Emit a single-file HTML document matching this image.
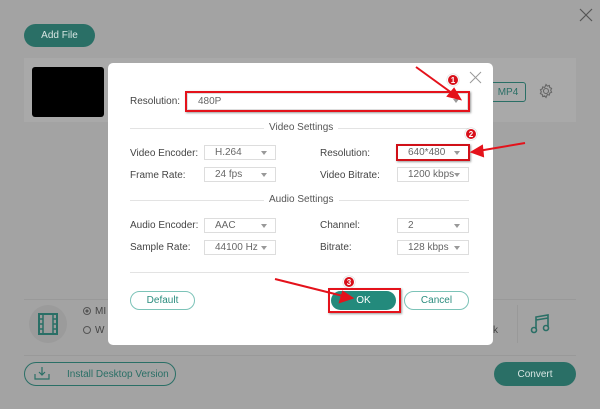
<!DOCTYPE html><html><head><style>
*{margin:0;padding:0;box-sizing:border-box}
body{width:600px;height:409px;background:#a3a3a3;position:relative;overflow:hidden;font-family:"Liberation Sans",sans-serif;font-size:10px;color:#444}
.a{position:absolute}
.c{display:flex;align-items:center;justify-content:center}
.sel{position:absolute;height:15px;border:1px solid #ddd;background:#fff;color:#666;font-size:10px;padding:0 0 0 10px;display:flex;align-items:center}
.sel:after{content:"";position:absolute;right:8px;top:5px;border:3px solid transparent;border-top:4px solid #999}
.lbl{position:absolute;font-size:10px;color:#444}
.red{position:absolute;border:2px solid #e4121b;box-shadow:1px 1px 2px rgba(0,0,0,.4)}
.num{position:absolute;width:12px;height:12px;border-radius:50%;background:#d8101a;color:#fff;font-size:8px;font-weight:bold;text-align:center;line-height:11px;border:1px solid #fff;box-shadow:0 0 1px #888}
</style></head><body>
<svg class="a" style="left:579px;top:8px" width="14" height="14"><path d="M1 1L13 13M13 1L1 13" stroke="#555" stroke-width="1.2"/></svg>
<div class="a c" style="left:24px;top:24px;width:71px;height:23px;border-radius:12px;background:#2a6f66;color:#d8e6e3;font-size:10px">Add File</div>
<div class="a" style="left:24px;top:58px;width:552px;height:64px;background:#a9a9a9"></div>
<div class="a" style="left:32px;top:67px;width:72px;height:50px;background:#000;border-radius:3px"></div>
<div class="a c" style="left:490px;top:82px;width:36px;height:20px;border:1px solid #2a6f66;border-radius:3px;color:#2a6f66;font-size:10px">MP4</div>
<svg class="a" style="left:538px;top:83px" width="16" height="16" viewBox="0 0 16 16"><circle cx="8" cy="8" r="2.5" fill="none" stroke="#666" stroke-width="1.1"/><path d="M8 1.5l1.3 1.6 2-.6.4 2 1.9.9-.9 1.9.9 1.9-1.9.9-.4 2-2-.6L8 14.5l-1.3-1.6-2 .6-.4-2-1.9-.9.9-1.9-.9-1.9 1.9-.9.4-2 2 .6z" fill="none" stroke="#666" stroke-width="1.1"/></svg>
<div class="a" style="left:24px;top:299px;width:552px;height:1px;background:#999"></div>
<div class="a" style="left:24px;top:355px;width:552px;height:1px;background:#999"></div>
<div class="a" style="left:29px;top:305px;width:38px;height:38px;border-radius:50%;background:#9b9b9b"></div>
<svg class="a" style="left:38px;top:313px" width="20" height="22"><rect x="1" y="1" width="18" height="20" fill="none" stroke="#2a6f66" stroke-width="2"/><path d="M5 1v20M15 1v20M1 6h4M1 11h4M1 16h4M15 6h4M15 11h4M15 16h4" stroke="#2a6f66" stroke-width="1.5"/></svg>
<div class="a" style="left:83px;top:307px;width:8px;height:8px;border-radius:50%;border:1px solid #555;background:radial-gradient(#555 35%,transparent 40%)"></div>
<div class="a" style="left:83px;top:326px;width:8px;height:8px;border-radius:50%;border:1px solid #555"></div>
<div class="a" style="left:95px;top:306px;font-size:10px">MI</div>
<div class="a" style="left:95px;top:325px;font-size:10px">W</div>
<div class="a" style="left:493px;top:325px;font-size:10px">k</div>
<div class="a" style="left:517px;top:305px;width:1px;height:38px;background:#999"></div>
<svg class="a" style="left:530px;top:312px" width="22" height="22"><path d="M6 17V5l12-2v12M6 8l12-2" fill="none" stroke="#2a6f66" stroke-width="1.6"/><circle cx="4" cy="18" r="2.5" fill="none" stroke="#2a6f66" stroke-width="1.6"/><circle cx="16" cy="16" r="2.5" fill="none" stroke="#2a6f66" stroke-width="1.6"/></svg>
<div class="a" style="left:24px;top:362px;width:152px;height:24px;border:1px solid #2a6f66;border-radius:12px;color:#2a6f66;font-size:10px;display:flex;align-items:center;padding-left:42px">Install Desktop Version</div>
<svg class="a" style="left:34px;top:366px" width="16" height="14"><path d="M8 1v8M5 6l3 3 3-3M1 8v5h14V8" fill="none" stroke="#2a6f66" stroke-width="1.2"/></svg>
<div class="a c" style="left:494px;top:362px;width:82px;height:24px;border-radius:12px;background:#2a6f66;color:#d8e6e3;font-size:10px">Convert</div>
<!-- modal -->
<div class="a" style="left:108px;top:63px;width:385px;height:282px;background:#fff;border-radius:5px"></div>
<svg class="a" style="left:469px;top:71px" width="13" height="13"><path d="M1 1L12 12M12 1L1 12" stroke="#999" stroke-width="1"/></svg>
<div class="lbl" style="left:130px;top:96px">Resolution:</div>
<div class="sel" style="left:187px;top:93px;width:281px;height:17px">480P</div>
<div class="red" style="left:185px;top:91px;width:285px;height:21px"></div>
<div class="a" style="left:130px;top:128px;width:339px;height:1px;background:#e3e3e3"></div>
<div class="a" style="left:264px;top:122px;background:#fff;padding:0 5px;font-size:10px;color:#555">Video Settings</div>
<div class="lbl" style="left:130px;top:148px">Video Encoder:</div>
<div class="sel" style="left:204px;top:145px;width:72px">H.264</div>
<div class="lbl" style="left:130px;top:170px">Frame Rate:</div>
<div class="sel" style="left:204px;top:167px;width:72px">24 fps</div>
<div class="lbl" style="left:320px;top:148px">Resolution:</div>
<div class="sel" style="left:397px;top:145px;width:72px">640*480</div>
<div class="red" style="left:396px;top:144px;width:74px;height:17px;border-color:#d01018"></div>
<div class="lbl" style="left:320px;top:170px">Video Bitrate:</div>
<div class="sel" style="left:397px;top:167px;width:72px">1200 kbps</div>
<div class="a" style="left:130px;top:200px;width:339px;height:1px;background:#e3e3e3"></div>
<div class="a" style="left:264px;top:194px;background:#fff;padding:0 5px;font-size:10px;color:#555">Audio Settings</div>
<div class="lbl" style="left:130px;top:220px">Audio Encoder:</div>
<div class="sel" style="left:204px;top:218px;width:72px">AAC</div>
<div class="lbl" style="left:130px;top:242px">Sample Rate:</div>
<div class="sel" style="left:204px;top:240px;width:72px">44100 Hz</div>
<div class="lbl" style="left:320px;top:220px">Channel:</div>
<div class="sel" style="left:397px;top:218px;width:72px">2</div>
<div class="lbl" style="left:320px;top:242px">Bitrate:</div>
<div class="sel" style="left:397px;top:240px;width:72px">128 kbps</div>
<div class="a" style="left:130px;top:272px;width:339px;height:1px;background:#e3e3e3"></div>
<div class="a c" style="left:130px;top:291px;width:65px;height:19px;border:1px solid #7cc3b8;border-radius:10px;color:#2a8c7e">Default</div>
<div class="a c" style="left:331px;top:291px;width:65px;height:19px;border-radius:10px;background:#238a7c;color:#fff">OK</div>
<div class="red" style="left:328px;top:288px;width:73px;height:25px"></div>
<div class="a c" style="left:404px;top:291px;width:65px;height:19px;border:1px solid #7cc3b8;border-radius:10px;color:#2a8c7e">Cancel</div>
<svg class="a" style="left:0;top:0" width="600" height="409">
<g stroke="#e4121b" stroke-width="2" fill="#e4121b">
<line x1="416" y1="67" x2="456" y2="96"/><polygon points="460,99 448,96 454,89"/>
<line x1="525" y1="143" x2="478" y2="151"/><polygon points="472,152 482,146 483,156"/>
<line x1="275" y1="279" x2="347" y2="297"/><polygon points="352,298 340,302 343,292"/>
</g></svg>
<div class="num" style="left:447px;top:74px">1</div>
<div class="num" style="left:465px;top:128px">2</div>
<div class="num" style="left:343px;top:276px">3</div>
</body></html>
